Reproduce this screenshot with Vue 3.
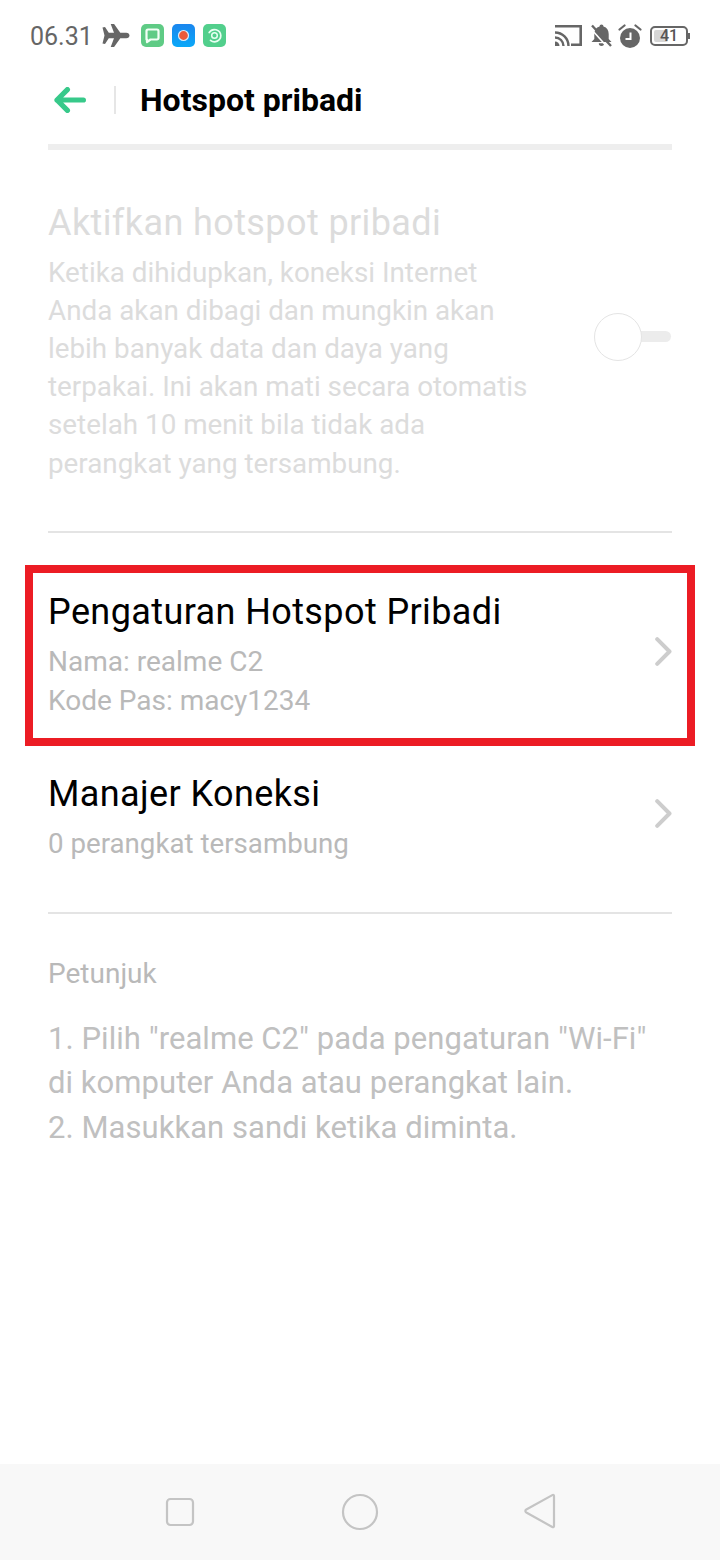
<script setup>
const bodyLines = [
  'Ketika dihidupkan, koneksi Internet',
  'Anda akan dibagi dan mungkin akan',
  'lebih banyak data dan daya yang',
  'terpakai. Ini akan mati secara otomatis',
  'setelah 10 menit bila tidak ada',
  'perangkat yang tersambung.'
]
</script>

<template>
  <div class="page">
    <div class="status">
      <div class="status-left">
        <span class="time">06.31</span>
        <svg class="plane" width="28" height="23" viewBox="0 0 28 23">
          <path fill="#666" d="M0.5 3.500 3 3 6.800 8.800H12L8.700 0h3.400l6.200 8.800h6c1.900 0 3.200 1.200 3.200 2.700s-1.300 2.700-3.200 2.700h-6L12.100 23H8.700L12 14.200H6.800L3 20l-2.500-.5 2-8z"/>
        </svg>
        <svg class="app" width="23" height="23" viewBox="0 0 23 23">
          <rect width="23" height="23" rx="5" fill="#5fcb85"/>
          <path fill="none" stroke="#f2fff6" stroke-width="2.200" stroke-linejoin="round" d="M7 5.500h9a1.500 1.500 0 0 1 1.500 1.500v7a1.500 1.500 0 0 1-1.500 1.500H9.500L6 18v-2.500h-.5V7A1.500 1.500 0 0 1 7 5.500z"/>
        </svg>
        <svg class="app" width="23" height="23" viewBox="0 0 23 23">
          <defs>
            <linearGradient id="blueApp" x1="0" y1="0" x2="0" y2="1">
              <stop offset="0" stop-color="#1a86ee"/>
              <stop offset="1" stop-color="#0aa8f8"/>
            </linearGradient>
          </defs>
          <rect width="23" height="23" rx="5" fill="url(#blueApp)"/>
          <circle cx="11.500" cy="11.500" r="5" fill="#ec5a3a" stroke="#d8eefc" stroke-width="1.200"/>
        </svg>
        <svg class="app" width="23" height="23" viewBox="0 0 23 23">
          <rect width="23" height="23" rx="5" fill="#52cf8c"/>
          <path fill="none" stroke="#e8fff2" stroke-width="1.700" stroke-linecap="round" d="M6.200 8.500A6.300 6.300 0 0 1 17.800 11.500 6.300 6.300 0 0 1 7.500 16.300"/>
          <circle cx="11.500" cy="11.500" r="2.800" fill="none" stroke="#e8fff2" stroke-width="1.500"/>
        </svg>
      </div>
      <div class="status-right">
        <svg class="cast" width="27" height="21" viewBox="0 0 27 21">
          <path fill="none" stroke="#666" stroke-width="2.600" d="M0 1.300h25.700v18.400H16"/>
          <path fill="none" stroke="#666" stroke-width="2.400" d="M0 7.500A13.500 13.500 0 0 1 13.500 21M0 12.500A8.500 8.500 0 0 1 8.500 21"/>
          <path fill="#666" d="M0 16.500A4.500 4.500 0 0 1 4.500 21H0z"/>
        </svg>
        <svg class="bell" width="21" height="23" viewBox="0 0 21 23">
          <path fill="#666" d="M10.500 0.500a2 2 0 0 1 2 2c3.500 1 5.200 3.800 5.200 7.500v5l2.800 3H0.500l2.800-3v-5c0-3.700 1.700-6.500 5.200-7.500a2 2 0 0 1 2-2zM7.800 19.300h5.400a2.700 2.700 0 0 1-5.400 0z"/>
          <path fill="none" stroke="#fff" stroke-width="1.600" d="M-1 3.800 17 23.800"/>
          <path fill="none" stroke="#666" stroke-width="2.400" d="M1 1.500 20 22"/>
        </svg>
        <svg class="alarm" width="24" height="24" viewBox="0 0 24 24">
          <circle cx="12" cy="14" r="10" fill="#666"/>
          <path fill="none" stroke="#fff" stroke-width="2" d="M12.500 8.500v6.500H7.500"/>
          <path fill="none" stroke="#666" stroke-width="2.200" stroke-linecap="round" d="M1.500 5.500 6.500 1.500M22.500 5.500 17.500 1.500"/>
        </svg>
        <div class="battery">
          <div class="battery-body">
            <div class="battery-fill"></div>
            <span class="battery-num">41</span>
          </div>
          <div class="battery-tip"></div>
        </div>
      </div>
    </div>

    <header class="header">
      <svg class="back" width="32" height="26" viewBox="0 0 32 26">
        <path fill="none" stroke="#37c98a" stroke-width="5.200" stroke-linecap="round" stroke-linejoin="round" d="M29.400 13H3M13.400 2.600 3 13l10.400 10.400"/>
      </svg>
      <div class="header-sep"></div>
      <h1 class="header-title">Hotspot pribadi</h1>
    </header>

    <main class="content">
      <div class="rule-thick"></div>

      <section class="toggle-row">
        <div class="toggle-text">
          <div class="disabled-title">Aktifkan hotspot pribadi</div>
          <div class="disabled-body">
            <div v-for="line in bodyLines" :key="line">{{ line }}</div>
          </div>
        </div>
        <div class="switch">
          <div class="switch-track"></div>
          <div class="switch-knob"></div>
        </div>
      </section>

      <div class="rule rule-one"></div>

      <div class="highlight">
        <div class="row row-first">
          <div>
            <div class="row-title">Pengaturan Hotspot Pribadi</div>
            <div class="row-sub row-sub-first">Nama: realme C2</div>
            <div class="row-sub">Kode Pas: macy1234</div>
          </div>
          <svg class="chev" width="17" height="29" viewBox="0 0 17 29">
            <path fill="none" stroke="#cdcdcd" stroke-width="4" stroke-linecap="round" stroke-linejoin="round" d="M2.200 2.200 14.500 14.500 2.200 26.800"/>
          </svg>
        </div>
      </div>

      <div class="row row-second">
        <div>
          <div class="row-title">Manajer Koneksi</div>
          <div class="row-sub row-sub-first row-sub-count">0 perangkat tersambung</div>
        </div>
        <svg class="chev" width="17" height="29" viewBox="0 0 17 29">
          <path fill="none" stroke="#cdcdcd" stroke-width="4" stroke-linecap="round" stroke-linejoin="round" d="M2.200 2.200 14.500 14.500 2.200 26.800"/>
        </svg>
      </div>

      <div class="rule"></div>

      <div class="hint-label">Petunjuk</div>
      <div class="hint-body">
        <div>1. Pilih "realme C2" pada pengaturan "Wi-Fi"</div>
        <div>di komputer Anda atau perangkat lain.</div>
        <div>2. Masukkan sandi ketika diminta.</div>
      </div>
    </main>

    <nav class="nav">
      <svg width="40" height="40" viewBox="0 0 40 40">
        <rect x="7" y="7" width="26" height="26" rx="3.500" fill="none" stroke="#c4c4c4" stroke-width="2.200"/>
      </svg>
      <svg width="40" height="40" viewBox="0 0 40 40">
        <circle cx="20" cy="20" r="17" fill="none" stroke="#c4c4c4" stroke-width="2.200"/>
      </svg>
      <svg width="40" height="40" viewBox="0 0 40 40">
        <path fill="none" stroke="#c4c4c4" stroke-width="2.200" stroke-linejoin="round" d="M34 4c0-1-.8-1.400-1.700-.9L6.300 17.500c-1.300.8-1.300 2.200 0 3L32.300 35c.9.500 1.700 0 1.700-1z"/>
      </svg>
    </nav>
  </div>
</template>

<style>
html, body { margin: 0; background: #fff; }
</style>

<style scoped>
.page {
  width: 720px;
  height: 1560px;
  display: flex;
  flex-direction: column;
  background: #fff;
  font-family: Roboto, "Liberation Sans", sans-serif;
  overflow: hidden;
}
.status {
  height: 72px;
  box-sizing: border-box;
  padding: 0 30px 1px 30px;
  display: flex;
  align-items: center;
  justify-content: space-between;
}
.status-left, .status-right { display: flex; align-items: center; }
.time { font-size: 25px; color: #666; margin-right: 11px; width: 61px; padding-top: 2px; }
.plane { margin-right: 11px; }
.app { margin-right: 8px; }
.cast { margin-right: 9px; }
.bell { margin-right: 6px; }
.alarm { margin-right: 8px; }
.battery { display: flex; align-items: center; }
.battery-body {
  width: 34px; height: 16px; border: 2px solid #666; border-radius: 5px;
  position: relative;
}
.battery-fill { position: absolute; left: 2px; top: 2px; width: 14px; height: 12px; background: #d6d6d6; border-radius: 2px; }
.battery-num {
  position: absolute; inset: 0; text-align: center; font-size: 16px; line-height: 16px;
  font-weight: 500; color: #555;
}
.battery-tip { width: 2px; height: 6px; background: #666; }

.header { height: 56px; display: flex; align-items: center; padding-left: 54px; }
.back { flex: none; }
.header-sep { width: 2px; height: 28px; background: #e6e6e6; margin-left: 28px; margin-right: 24px; }
.header-title { margin: 0; font-size: 32px; font-weight: 700; color: #000; }

.content { flex: 1; padding: 16px 48px 0; display: flex; flex-direction: column; }
.rule-thick { height: 6px; background: #eee; flex: none; }
.rule { height: 2px; background: #e4e4e4; flex: none; }

.toggle-row { display: flex; align-items: center; justify-content: space-between; padding-top: 49px; }
.disabled-title { font-size: 36px; line-height: 48px; color: #dcdcdc; letter-spacing: .4px; white-space: nowrap; }
.disabled-body { font-size: 27.8px; line-height: 38.2px; color: #dcdcdc; margin-top: 6.5px; white-space: nowrap; }
.switch { position: relative; width: 77px; height: 48px; margin-bottom: 8px; margin-right: 1px; }
.switch-track { position: absolute; right: 0; top: 18px; width: 40px; height: 11px; background: #ececec; border-radius: 6px; }
.switch-knob {
  position: absolute; left: 0; top: 0; width: 48px; height: 48px; box-sizing: border-box;
  border: 1.5px solid #e4e4e4; border-radius: 50%; background: #fff;
}
.rule-one { margin-top: 48.3px; }

.highlight {
  margin: 32px -23px 0;
  border: 8px solid #ec1c24;
  height: 181px;
  box-sizing: border-box;
  padding: 0 15px;
}
.row { display: flex; align-items: center; justify-content: space-between; box-sizing: border-box; }
.row-first { height: 100%; padding-bottom: 4px; }
.row-second { height: 166px; padding: 23px 0 49.5px; }
.row-title { font-size: 36px; line-height: 48px; padding-top: 1px; color: #000; letter-spacing: .4px; white-space: nowrap; }
.row-sub { font-size: 28px; line-height: 39px; color: #b9b9b9; white-space: nowrap; }
.row-sub-first { margin-top: 5.5px; }
.row-sub-count { font-size: 27.7px; }
.chev { flex: none; margin-bottom: 5px; }

.hint-label { font-size: 28px; line-height: 36px; color: #b9b9b9; margin-top: 42px; }
.hint-body { font-size: 31px; line-height: 44.5px; letter-spacing: .05px; color: #c0c0c0; margin-top: 24.75px; white-space: nowrap; }

.nav {
  height: 96px; flex: none; background: #f8f8f8;
  display: flex; align-items: center; justify-content: center; gap: 140px;
}
</style>
